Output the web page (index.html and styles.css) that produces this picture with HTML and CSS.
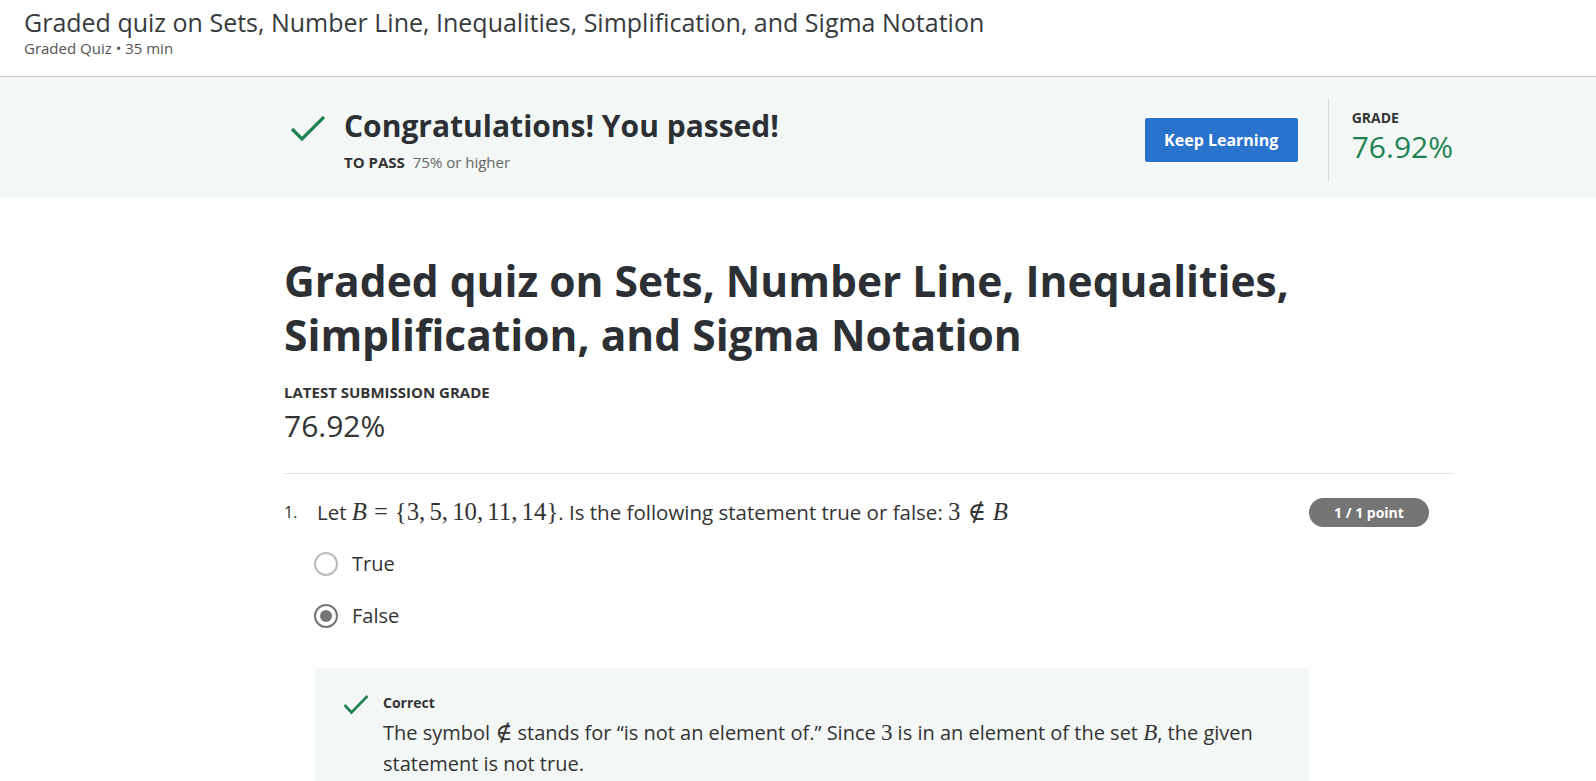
FILE: index.html
```html
<!DOCTYPE html>
<html>
<head>
<meta charset="utf-8">
<link rel="stylesheet" href="styles.css">
</head>
<body>
<header class="top">
  <div class="top-title">Graded quiz on Sets, Number Line, Inequalities, Simplification, and Sigma Notation</div>
  <div class="top-sub">Graded Quiz • 35 min</div>
</header>
<section class="banner">
  <div class="banner-inner">
    <div class="pass">
      <svg class="pass-icon" width="36" height="30" viewBox="0 0 36 30"><path d="M2 15 L12 25 L34 3" fill="none" stroke="#1f8354" stroke-width="3.2"/></svg>
      <div class="pass-text">
        <div class="pass-title">Congratulations! You passed!</div>
        <div class="pass-sub"><b>TO PASS</b> 75% or higher</div>
      </div>
    </div>
    <div class="banner-right">
      <button class="btn">Keep Learning</button>
      <div class="grade">
        <div class="grade-label">GRADE</div>
        <div class="grade-value">76.92%</div>
      </div>
    </div>
  </div>
</section>
<main class="main">
  <h1 class="quiz-title">Graded quiz on Sets, Number Line, Inequalities, Simplification, and Sigma Notation</h1>
  <div class="latest-label">LATEST SUBMISSION GRADE</div>
  <div class="latest-value">76.92%</div>
  <hr class="sep">
  <div class="question">
    <div class="q-head">
      <span class="q-num">1.</span>
      <span class="q-text">Let <span class="m"><i>B</i><span class="rel">=</span>{3<span class="pc">,</span>5<span class="pc">,</span>10<span class="pc">,</span>11<span class="pc">,</span>14}</span>. Is the following statement true or false: <span class="m">3<span class="rel">∉</span><i>B</i></span></span>
      <span class="pill">1 / 1 point</span>
    </div>
    <div class="options">
      <label class="opt"><span class="radio"></span>True</label>
      <label class="opt"><span class="radio checked"></span>False</label>
    </div>
    <div class="feedback">
      <svg class="fb-icon" width="26" height="22" viewBox="0 0 26 22"><path d="M1.5 11 L8.5 18.5 L24.5 2" fill="none" stroke="#1f8354" stroke-width="2.6"/></svg>
      <div class="fb-body">
        <div class="fb-title">Correct</div>
        <div class="fb-text">The symbol <span class="m">∉</span> stands for “is not an element of.” Since <span class="m">3</span> is in an element of the set <span class="m"><i>B</i></span>, the given statement is not true.</div>
      </div>
    </div>
  </div>
</main>
</body>
</html>
```
FILE: styles.css
```css
* { box-sizing: border-box; }
html, body { margin: 0; padding: 0; }
body {
  font-family: "Open Sans", "Liberation Sans", sans-serif;
  color: #333;
  background: #fff;
  width: 1596px;
  height: 781px;
  overflow: hidden;
}
.top {
  height: 77px;
  padding: 6px 0 0 24px;
  border-bottom: 1px solid #c8c8c8;
}
.top-title {
  font-size: 25px;
  line-height: 32px;
  color: #373a3c;
}
.top-sub {
  font-size: 15px;
  line-height: 20px;
  color: #555;
}
.banner {
  background: #f3f8f6;
  height: 121px;
}
.banner-inner {
  margin-left: 284px;
  width: 1169px;
  height: 100%;
  display: flex;
  align-items: center;
  justify-content: space-between;
}
.pass {
  display: flex;
  align-items: flex-start;
  padding-left: 6px;
  margin-top: 2px;
}
.pass-icon { margin-top: 8px; margin-right: 18px; }
.pass-title {
  font-size: 30px;
  line-height: 40px;
  font-weight: 700;
  color: #2c2f33;
}
.pass-sub {
  font-size: 15px;
  line-height: 20px;
  color: #666;
  margin-top: 6px;
}
.pass-sub b { color: #333; margin-right: 4px; }
.banner-right {
  display: flex;
  align-items: center;
  height: 100%;
}
.btn {
  font-family: inherit;
  background: #2a73cc;
  color: #fff;
  border: 0;
  border-radius: 2px;
  width: 153px;
  height: 44px;
  font-size: 16px;
  font-weight: 700;
  margin-right: 30px;
  margin-top: 4px;
}
.grade {
  border-left: 1px solid #ddd;
  height: 84px;
  padding: 11px 0 0 23px;
  margin-top: 4px;
}
.grade-label {
  font-size: 14px;
  font-weight: 700;
  line-height: 18px;
  color: #333;
}
.grade-value {
  margin-top: 2px;
  font-size: 30px;
  line-height: 36px;
  color: #1f8354;
}
.main {
  margin-left: 284px;
  width: 1169px;
  padding-top: 56px;
}
.quiz-title {
  margin: 0;
  font-size: 42.5px;
  line-height: 54px;
  font-weight: 700;
  color: #2c2f33;
  width: 1100px;
}
.latest-label {
  margin-top: 20px;
  font-size: 15px;
  line-height: 20px;
  font-weight: 700;
  color: #333;
}
.latest-value {
  margin-top: 6px;
  font-size: 30px;
  line-height: 36px;
  color: #333;
}
.sep {
  border: 0;
  border-top: 1px solid #e1e1e1;
  margin: 29px 0 0 0;
}
.q-head {
  display: flex;
  align-items: center;
  margin-top: 23px;
  font-size: 20.5px;
  line-height: 30px;
}
.q-num { font-size: 16px; width: 33px; }
.q-text { flex: 1; }
.m {
  font-family: "Liberation Serif", "DejaVu Serif", serif;
  font-size: 1.21em;
}
.m i { font-style: italic; }
.rel { margin: 0 0.278em; }
.pc { margin-right: 0.167em; }
.pill {
  background: #757575;
  color: #fff;
  font-size: 14px;
  font-weight: 700;
  height: 29px;
  line-height: 29px;
  width: 120px;
  text-align: center;
  border-radius: 15px;
  margin-right: 24px;
}
.options {
  padding-left: 30px;
  margin-top: 22px;
  display: flex;
  flex-direction: column;
  gap: 22px;
}
.opt {
  display: flex;
  align-items: center;
  font-size: 20px;
  line-height: 30px;
}
.radio {
  width: 24px;
  height: 24px;
  border: 2px solid #bbb;
  border-radius: 50%;
  margin-right: 14px;
  position: relative;
}
.radio.checked { border-color: #757575; }
.radio.checked::after {
  content: "";
  position: absolute;
  left: 4px; top: 4px;
  width: 12px; height: 12px;
  border-radius: 50%;
  background: #757575;
}
.feedback {
  margin: 37px 0 0 31px;
  width: 994px;
  background: #f3f8f6;
  padding: 25px 28px 20px 28px;
  display: flex;
}
.fb-icon { margin-top: 1px; margin-right: 14px; flex: none; }
.fb-title {
  font-size: 14px;
  font-weight: 700;
  line-height: 20px;
  color: #333;
}
.fb-text {
  font-size: 20px;
  line-height: 31px;
  margin-top: 4px;
}
.fb-text .m { font-size: 1.15em; line-height: 20px; }
```
